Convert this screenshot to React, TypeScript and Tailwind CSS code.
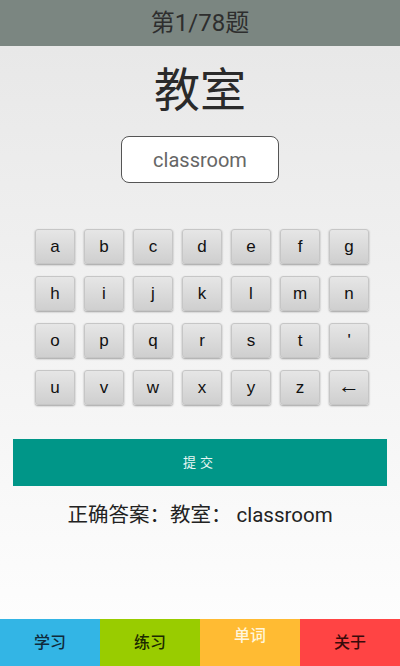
import React from "react";

const rows = [
  ["a", "b", "c", "d", "e", "f", "g"],
  ["h", "i", "j", "k", "l", "m", "n"],
  ["o", "p", "q", "r", "s", "t", "'"],
  ["u", "v", "w", "x", "y", "z", "←"],
];

export default function App() {
  const font = { fontFamily: "Roboto, 'Noto Sans CJK SC', sans-serif" };
  return (
    <div className="w-[400px] h-[666px] flex flex-col overflow-hidden" style={font}>
      <div className="h-[46px] bg-[#7b8681] flex items-center justify-center text-[24px] text-[#2e2e2e]">
        第1/78题
      </div>
      <div className="flex-1 flex flex-col items-center bg-gradient-to-b from-[#e8e8e8] to-[#fdfdfd]">
        <div className="mt-[16px] h-[56px] leading-[56px] text-[46px] text-[#2a2a2a]">教室</div>
        <div className="mt-[18px] w-[158px] h-[47px] rounded-[8px] border-[1.5px] border-[#555] bg-white flex items-center justify-center text-[20px] text-[#666]">
          classroom
        </div>
        <div className="mt-[46px] self-start ml-[35px] grid grid-cols-[repeat(7,40px)] gap-x-[9px] gap-y-[12px]">
          {rows.flat().map((k, i) =>
            k === "←" ? (
              <div
                key={i}
                className="h-[35px] pb-[5px] rounded-[3px] border border-[#c6c6c6] bg-gradient-to-b from-[#e6e6e6] to-[#cfcfcf] shadow-[0_1px_2px_rgba(0,0,0,0.35)] flex items-center justify-center text-[22px] text-[#111]"
                style={{ fontFamily: "Roboto, sans-serif" }}
              >
                {k}
              </div>
            ) : (
              <div
                key={i}
                className="h-[35px] rounded-[3px] border border-[#c6c6c6] bg-gradient-to-b from-[#e6e6e6] to-[#cfcfcf] shadow-[0_1px_2px_rgba(0,0,0,0.35)] flex items-center justify-center text-[17px] text-[#111]"
                style={{ fontFamily: "'Liberation Sans', Arial, sans-serif" }}
              >
                {k}
              </div>
            )
          )}
        </div>
        <div className="mt-[34px] self-stretch mx-[13px] h-[47px] bg-[#009688] flex items-center justify-center text-[13px] text-[#e8f6f4] tracking-[4px]">
          提交
        </div>
        <div className="mt-[14px] text-[20.5px] text-[#222]">正确答案：教室：&nbsp;classroom</div>
      </div>
      <div className="h-[47px] grid grid-cols-4 text-[16px] font-medium">
        <div className="bg-[#33b5e5] flex items-center justify-center text-[#102a3a]">学习</div>
        <div className="bg-[#99cc00] flex items-center justify-center text-[#1c2a00]">练习</div>
        <div className="bg-[#ffbb33] flex justify-center pt-[5px] text-[#fff6dc]">单词</div>
        <div className="bg-[#ff4444] flex items-center justify-center text-[#3a0a0a]">关于</div>
      </div>
    </div>
  );
}
